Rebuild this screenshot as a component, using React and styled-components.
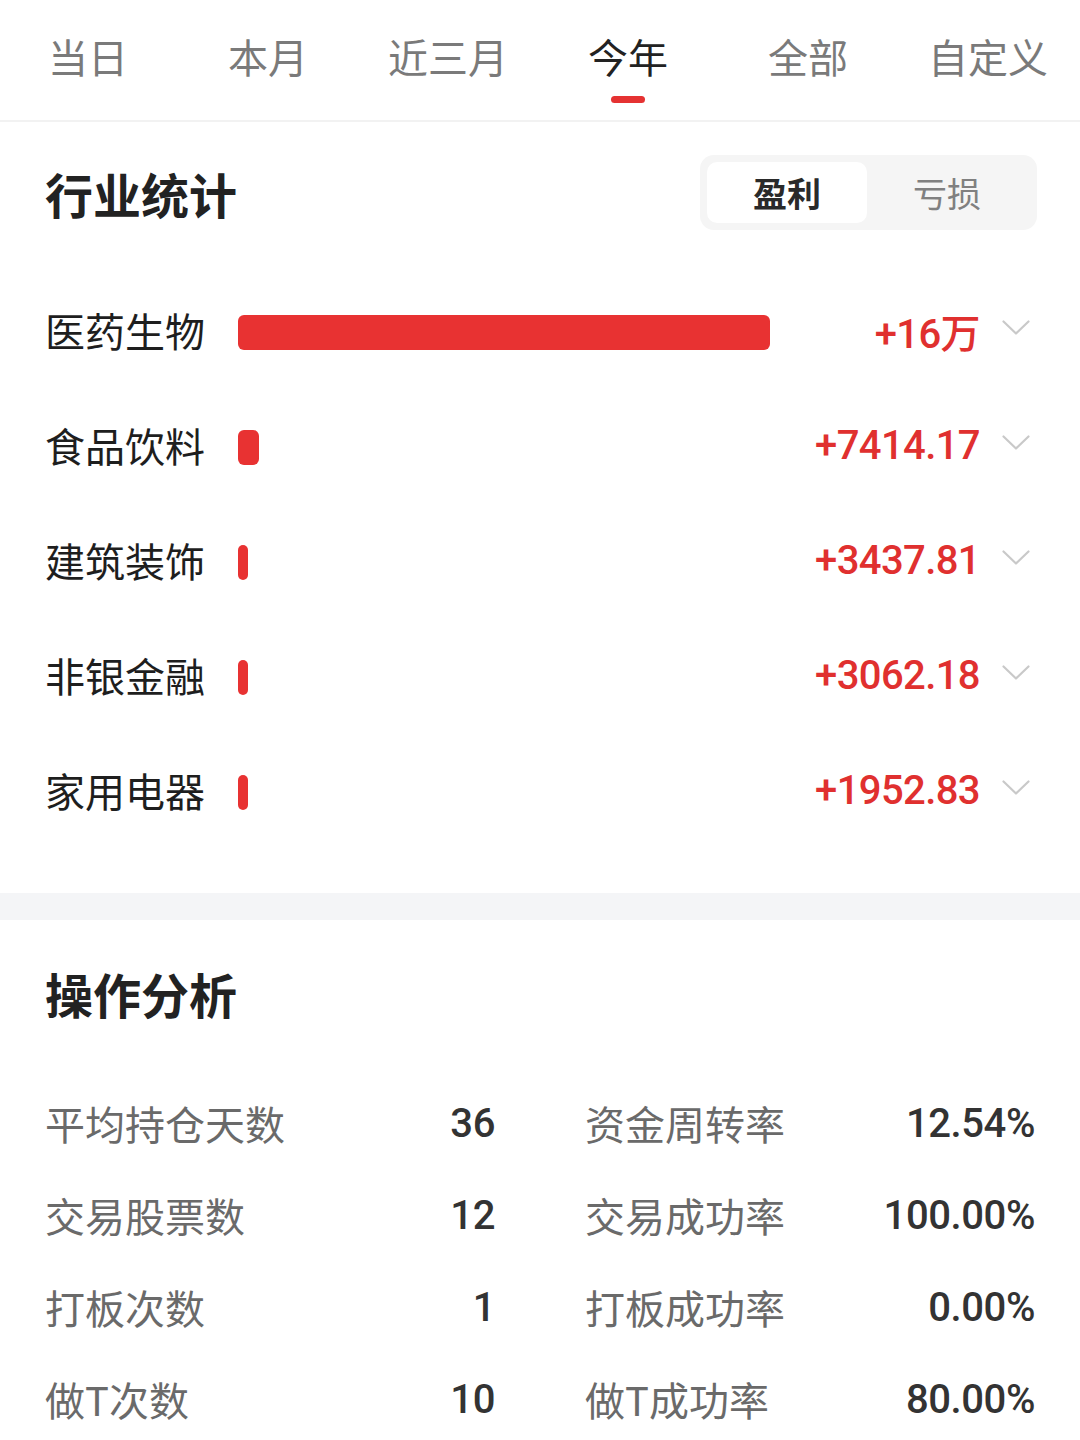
import React from "react"
import styled, { createGlobalStyle } from "styled-components"

const GlobalStyle = createGlobalStyle`
  * { box-sizing: border-box; }
  body {
    margin: 0;
    background: #ffffff;
    font-family: "Noto Sans CJK SC", "Noto Sans", sans-serif;
  }
`;

const Page = styled.div`
  width: 1080px;
  background: #ffffff;
`;

const TabBar = styled.div`
  display: flex;
  height: 122px;
  border-bottom: 2px solid #f2f2f2;
`;

const Tab = styled.div`
  flex: 1;
  display: flex;
  flex-direction: column;
  align-items: center;
  padding-top: 30px;
  padding-right: 4px;
  font-size: 40px;
  line-height: 52px;
  color: ${props => (props.active ? "#222222" : "#7a7a7a")};
`;

const Indicator = styled.div`
  width: 34px;
  height: 7px;
  margin-top: 14px;
  border-radius: 4px;
  background: ${props => (props.show ? "#e53232" : "transparent")};
`;

const Section = styled.section`
  padding: ${props => props.pad};
`;

const Header = styled.div`
  display: flex;
  align-items: center;
  justify-content: space-between;
  height: 75px;
`;

const Title = styled.h2`
  margin: 0;
  font-size: 48px;
  line-height: 56px;
  font-weight: 700;
  color: #222222;
`;

const Segment = styled.div`
  display: flex;
  width: 337px;
  height: 75px;
  padding: 7px;
  border-radius: 14px;
  background: #f5f5f5;
  margin-right: -2px;
`;

const SegItem = styled.div`
  width: 160px;
  display: flex;
  align-items: center;
  justify-content: center;
  border-radius: 10px;
  font-size: 34px;
  font-weight: ${props => (props.active ? 700 : 400)};
  color: ${props => (props.active ? "#2a2a2a" : "#808080")};
  background: ${props => (props.active ? "#ffffff" : "transparent")};
`;

const List = styled.div`
  margin-top: 45px;
`;

const Row = styled.div`
  display: flex;
  align-items: center;
  height: 115px;
`;

const RowLabel = styled.div`
  width: 193px;
  padding-bottom: 5px;
  font-size: 40px;
  color: #1e1e1e;
`;

const Track = styled.div`
  width: 532px;
  height: 35px;
  display: flex;
`;

const Bar = styled.div`
  height: 100%;
  border-radius: 6px;
  background: #e83232;
`;

const Amount = styled.div`
  flex: 1;
  padding-bottom: 4px;
  text-align: right;
  font-family: Roboto, "Noto Sans CJK SC", sans-serif;
  font-size: 40px;
  font-weight: 500;
  letter-spacing: -0.6px;
  color: #e0302f;
`;

const Chevron = styled.div`
  width: 55px;
  display: flex;
  justify-content: flex-end;
  padding-right: 5px;
  margin-top: -10px;
`;

const Divider = styled.div`
  height: 27px;
  background: #f4f5f7;
`;

const Grid = styled.div`
  display: grid;
  grid-template-columns: 1fr 1fr;
  column-gap: 90px;
  margin-top: 56px;
`;

const Stat = styled.div`
  display: flex;
  align-items: center;
  justify-content: space-between;
  height: 92px;
`;

const StatLabel = styled.span`
  font-size: 40px;
  color: #6a6a6a;
`;

const StatValue = styled.span`
  font-family: Roboto, "Noto Sans CJK SC", sans-serif;
  font-size: 40px;
  font-weight: 500;
  letter-spacing: -0.4px;
  color: #333333;
`;

const tabs = ["当日", "本月", "近三月", "今年", "全部", "自定义"];

const industries = [
  { name: "医药生物", value: "+16万", width: 532 },
  { name: "食品饮料", value: "+7414.17", width: 21 },
  { name: "建筑装饰", value: "+3437.81", width: 10 },
  { name: "非银金融", value: "+3062.18", width: 10 },
  { name: "家用电器", value: "+1952.83", width: 10 },
];

const stats = [
  ["平均持仓天数", "36"],
  ["资金周转率", "12.54%"],
  ["交易股票数", "12"],
  ["交易成功率", "100.00%"],
  ["打板次数", "1"],
  ["打板成功率", "0.00%"],
  ["做T次数", "10"],
  ["做T成功率", "80.00%"],
];

const ChevronIcon = () => (
  <svg width="28" height="16" viewBox="0 0 28 16">
    <path d="M1.5 1.5 L14 13.5 L26.5 1.5" fill="none" stroke="#c9c9c9" strokeWidth="2.2" strokeLinecap="round" strokeLinejoin="round" />
  </svg>
);

export default function App() {
  return (
    <Page>
      <GlobalStyle />
      <TabBar>
        {tabs.map(t => (
          <Tab key={t} active={t === "今年"}>
            {t}
            <Indicator show={t === "今年"} />
          </Tab>
        ))}
      </TabBar>

      <Section pad="33px 45px 43px 45px">
        <Header>
          <Title>行业统计</Title>
          <Segment>
            <SegItem active>盈利</SegItem>
            <SegItem>亏损</SegItem>
          </Segment>
        </Header>
        <List>
          {industries.map(item => (
            <Row key={item.name}>
              <RowLabel>{item.name}</RowLabel>
              <Track>
                <Bar style={{ width: item.width }} />
              </Track>
              <Amount>{item.value}</Amount>
              <Chevron>
                <ChevronIcon />
              </Chevron>
            </Row>
          ))}
        </List>
      </Section>

      <Divider />

      <Section pad="45px 45px 0 45px">
        <Title>操作分析</Title>
        <Grid>
          {stats.map(([label, value]) => (
            <Stat key={label}>
              <StatLabel>{label}</StatLabel>
              <StatValue>{value}</StatValue>
            </Stat>
          ))}
        </Grid>
      </Section>
    </Page>
  );
}
